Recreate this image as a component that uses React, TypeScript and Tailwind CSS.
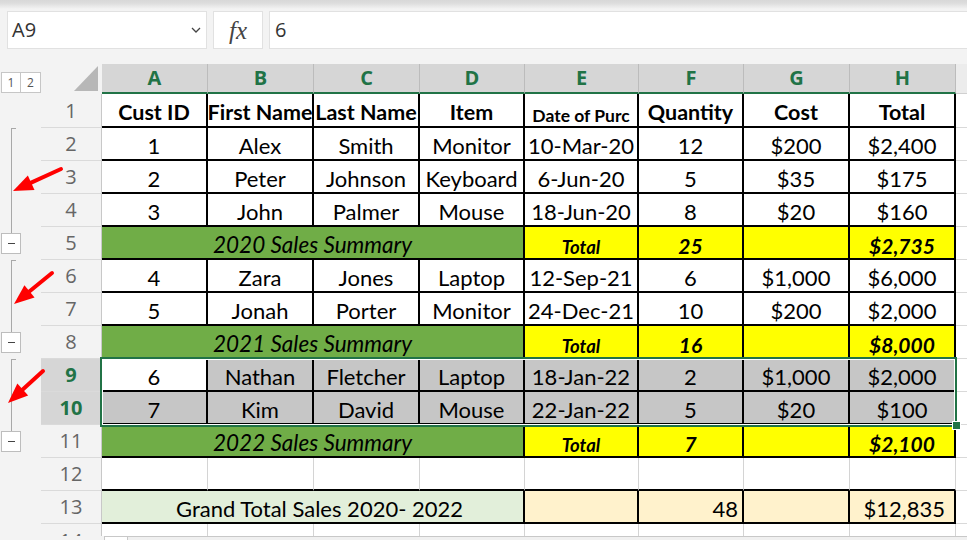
import React from 'react';

const W = ['w-[106px]', 'w-[106px]', 'w-[106px]', 'w-[105px]', 'w-[114px]', 'w-[105px]', 'w-[106px]', 'w-[106px]'];
const LETTERS = ['A', 'B', 'C', 'D', 'E', 'F', 'G', 'H'];

type Out = 'none' | 'start' | 'line' | 'end';

function OutlineSlot({ kind }: { kind: Out }) {
  if (kind === 'start')
    return (
      <div className="w-[41px] shrink-0 h-full">
        <div className="ml-[11px] h-full w-[5px] border-l border-t border-[#a8a8a8]" />
      </div>
    );
  if (kind === 'line')
    return (
      <div className="w-[41px] shrink-0 h-full">
        <div className="ml-[11px] h-full border-l border-[#a8a8a8]" />
      </div>
    );
  if (kind === 'end')
    return (
      <div className="w-[41px] shrink-0 h-full flex flex-col">
        <div className="ml-[11px] h-[6px] border-l border-[#a8a8a8]" />
        <div className="ml-[1px] w-[20px] h-[21px] bg-white border border-[#bdbdbd] flex items-center justify-center">
          <div className="w-[7px] h-[1.5px] bg-[#444444]" />
        </div>
      </div>
    );
  return <div className="w-[41px] shrink-0 h-full" />;
}

function Row({
  n,
  out = 'none',
  sel = false,
  h = 'h-[33px]',
  children,
}: {
  n: string;
  out?: Out;
  sel?: boolean;
  h?: string;
  children?: React.ReactNode;
}) {
  return (
    <div className={`flex ${h}`}>
      <OutlineSlot kind={out} />
      <div
        className={`w-[61px] shrink-0 h-full flex items-center justify-center border-b border-r border-b-[#dadada] border-r-[#c8c8c8] text-[20px] [font-family:'Open_Sans',sans-serif] ${
          sel ? 'bg-[#d6d6d6] text-[#217346] font-bold' : 'text-[#666666]'
        }`}
      >
        {n}
      </div>
      {children}
      <div className="flex-1 h-full bg-white border-b border-b-[#d9d9d9]" />
    </div>
  );
}

function Cell({
  w,
  children,
  bg = 'bg-white',
  font = 'text-[22px]',
  just = 'justify-center',
  border = 'border-r-2 border-b-2 border-black',
}: {
  w: string;
  children?: React.ReactNode;
  bg?: string;
  font?: string;
  just?: string;
  border?: string;
}) {
  return (
    <div
      className={`${w} shrink-0 h-full flex items-end overflow-hidden whitespace-nowrap leading-[1.2] ${just} ${bg} ${font} ${border}`}
    >
      {children}
    </div>
  );
}

function Cells({ vals, fonts, bgs }: { vals: string[]; fonts?: string[]; bgs?: string[] }) {
  return (
    <>
      {vals.map((v, i) => (
        <Cell key={i} w={W[i]} font={fonts ? fonts[i] : 'text-[22px]'} bg={bgs ? bgs[i] : 'bg-white'}>
          {v}
        </Cell>
      ))}
    </>
  );
}

function Summary({ label, qty, total }: { label: string; qty: string; total: string }) {
  return (
    <>
      <Cell w="w-[423px]" bg="bg-[#70ad47]" font="italic text-[22.5px]">
        {label}
      </Cell>
      <Cell w={W[4]} bg="bg-[#ffff00]" font="italic font-bold text-[18.5px]">
        Total
      </Cell>
      <Cell w={W[5]} bg="bg-[#ffff00]" font="italic font-bold text-[21px]">
        {qty}
      </Cell>
      <Cell w={W[6]} bg="bg-[#ffff00]" />
      <Cell w={W[7]} bg="bg-[#ffff00]" font="italic font-bold text-[21px]">
        {total}
      </Cell>
    </>
  );
}

function Arrow({ x1, y1, x2, y2 }: { x1: number; y1: number; x2: number; y2: number }) {
  const dx = x2 - x1;
  const dy = y2 - y1;
  const L = Math.hypot(dx, dy);
  const ux = dx / L;
  const uy = dy / L;
  const nx = -uy;
  const ny = ux;
  const hl = 20;
  const hw = 8;
  const bx = x2 - ux * hl;
  const by = y2 - uy * hl;
  return (
    <g>
      <line x1={x1} y1={y1} x2={bx + ux * 3} y2={by + uy * 3} stroke="#ff0000" strokeWidth={4} strokeLinecap="round" />
      <polygon
        points={`${x2},${y2} ${bx + nx * hw},${by + ny * hw} ${bx - nx * hw},${by - ny * hw}`}
        fill="#ff0000"
      />
    </g>
  );
}

const GRAY = 'bg-[#c6c6c6]';
const HB = 'font-bold text-[21.5px]';

export default function App() {
  return (
    <div className="relative w-[967px] h-[540px] overflow-hidden bg-[#f3f3f3] text-black">
      {/* formula bar */}
      <div className="h-[64px] bg-[linear-gradient(#d8d8d8_0px,#dcdcdc_3px,#f3f3f3_9px)] pt-[11px] pl-[7px] flex items-start gap-[6px] [font-family:'Open_Sans',sans-serif]">
        <div className="w-[200px] h-[38px] bg-white border border-[#e1e1e1] flex items-center justify-between pl-[4px] pr-[5px]">
          <span className="text-[20px] text-[#333333]">A9</span>
          <svg width="10" height="6" viewBox="0 0 10 6">
            <polyline points="1,1 5,5 9,1" fill="none" stroke="#444444" strokeWidth="1.3" />
          </svg>
        </div>
        <div className="w-[50px] h-[38px] bg-white border border-[#e1e1e1] flex items-center justify-center">
          <span className="[font-family:'Liberation_Serif',serif] italic text-[25px] text-[#444444] leading-none pt-[1px]">
            fx
          </span>
        </div>
        <div className="flex-1 h-[38px] bg-white border border-r-0 border-[#e1e1e1] flex items-center pl-[5px]">
          <span className="text-[20px] text-[#333333]">6</span>
        </div>
      </div>

      {/* column headers */}
      <div className="flex h-[30px]">
        <div className="w-[102px] shrink-0 flex">
          <div className="w-[41px] shrink-0 pt-[8px] pl-[1px] flex">
            <div className="w-[20px] h-[21px] bg-white border border-[#c6c6c6] flex items-center justify-center text-[12px] text-[#555555] [font-family:'Open_Sans',sans-serif]">
              1
            </div>
            <div className="w-[20px] h-[21px] bg-white border border-l-0 border-[#c6c6c6] flex items-center justify-center text-[12px] text-[#555555] [font-family:'Open_Sans',sans-serif]">
              2
            </div>
          </div>
          <div className="flex-1 flex items-end justify-end pb-[3px] pr-[4px]">
            <svg width="24" height="25" viewBox="0 0 24 25">
              <polygon points="0,25 24,25 24,0" fill="#b7b7b7" />
            </svg>
          </div>
        </div>
        {LETTERS.map((l, i) => (
          <div
            key={l}
            className={`${W[i]} shrink-0 h-full bg-[#d6d6d6] border-r border-b-2 border-r-[#bcbcbc] border-b-[#217346] flex items-center justify-center text-[20px] font-bold text-[#217346] [font-family:'Open_Sans',sans-serif]`}
          >
            {l}
          </div>
        ))}
        <div className="flex-1 h-full bg-[#ececec] border-b border-b-[#d0d0d0]" />
      </div>

      {/* rows */}
      <div className="[font-family:Lato,sans-serif]">
        <Row n="1" h="h-[34px]">
          <Cells
            vals={['Cust ID', 'First Name', 'Last Name', 'Item', 'Date of Purc', 'Quantity', 'Cost', 'Total']}
            fonts={[HB, HB, HB, HB, 'font-bold text-[17.5px]', HB, HB, HB]}
          />
        </Row>
        <Row n="2" out="start">
          <Cells vals={['1', 'Alex', 'Smith', 'Monitor', '10-Mar-20', '12', '$200', '$2,400']} />
        </Row>
        <Row n="3" out="line">
          <Cells vals={['2', 'Peter', 'Johnson', 'Keyboard', '6-Jun-20', '5', '$35', '$175']} />
        </Row>
        <Row n="4" out="line">
          <Cells vals={['3', 'John', 'Palmer', 'Mouse', '18-Jun-20', '8', '$20', '$160']} />
        </Row>
        <Row n="5" out="end">
          <Summary label="2020 Sales Summary" qty="25" total="$2,735" />
        </Row>
        <Row n="6" out="start">
          <Cells vals={['4', 'Zara', 'Jones', 'Laptop', '12-Sep-21', '6', '$1,000', '$6,000']} />
        </Row>
        <Row n="7" out="line">
          <Cells vals={['5', 'Jonah', 'Porter', 'Monitor', '24-Dec-21', '10', '$200', '$2,000']} />
        </Row>
        <Row n="8" out="end">
          <Summary label="2021 Sales Summary" qty="16" total="$8,000" />
        </Row>
        <Row n="9" out="start" sel>
          <Cells
            vals={['6', 'Nathan', 'Fletcher', 'Laptop', '18-Jan-22', '2', '$1,000', '$2,000']}
            bgs={['bg-white', GRAY, GRAY, GRAY, GRAY, GRAY, GRAY, GRAY]}
          />
        </Row>
        <Row n="10" out="line" sel>
          <Cells
            vals={['7', 'Kim', 'David', 'Mouse', '22-Jan-22', '5', '$20', '$100']}
            bgs={[GRAY, GRAY, GRAY, GRAY, GRAY, GRAY, GRAY, GRAY]}
          />
        </Row>
        <Row n="11" out="end">
          <Summary label="2022 Sales Summary" qty="7" total="$2,100" />
        </Row>
        <Row n="12">
          {W.map((w, i) => (
            <Cell key={i} w={w} border="border-r border-b-2 border-r-[#d4d4d4] border-b-black" />
          ))}
        </Row>
        <Row n="13">
          <Cell w="w-[423px]" bg="bg-[#e2efda]" just="justify-center pl-[14px]">
            Grand Total Sales 2020- 2022
          </Cell>
          <Cell w={W[4]} bg="bg-[#fff2cc]" />
          <Cell w={W[5]} bg="bg-[#fff2cc]" just="justify-end pr-[4px]">
            48
          </Cell>
          <Cell w={W[6]} bg="bg-[#fff2cc]" />
          <Cell w={W[7]} bg="bg-[#fff2cc]" just="justify-end pr-[9px]">
            $12,835
          </Cell>
        </Row>
        {/* partial row 14 */}
        <div className="flex h-[12px] overflow-hidden">
          <div className="w-[41px] shrink-0" />
          <div className="w-[61px] shrink-0 h-full overflow-hidden border-r border-r-[#c8c8c8]">
            <div className="h-[33px] flex items-center justify-center text-[20px] text-[#666666] [font-family:'Open_Sans',sans-serif]">
              14
            </div>
          </div>
          {W.map((w, i) => (
            <div key={i} className={`${w} shrink-0 h-full bg-white border-r border-r-[#d4d4d4]`} />
          ))}
          <div className="flex-1 h-full bg-white" />
        </div>
        {/* bottom bar */}
        <div className="flex h-[4px]">
          <div className="w-[102px] shrink-0" />
          <div className="ml-[2px] w-[24px] h-full bg-white border border-b-0 border-[#c8c8c8]" />
          <div className="flex-1 h-full bg-[#f0f0f0] border-t border-[#c8c8c8]" />
        </div>
      </div>

      {/* selection rectangle */}
      <div className="absolute left-[100px] top-[357px] w-[857px] h-[70px] border-2 border-[#217346] pointer-events-none">
        <div className="w-full h-full border border-white" />
      </div>
      <div className="absolute left-[952px] top-[421px] w-[9px] h-[9px] bg-[#217346] border border-white pointer-events-none" />

      {/* red annotation arrows */}
      <svg className="absolute left-0 top-0 pointer-events-none" width="110" height="540" viewBox="0 0 110 540">
        <Arrow x1={61} y1={169} x2={13} y2={191} />
        <Arrow x1={52} y1={273} x2={14} y2={304} />
        <Arrow x1={43} y1={371} x2={8} y2={403} />
      </svg>
    </div>
  );
}
